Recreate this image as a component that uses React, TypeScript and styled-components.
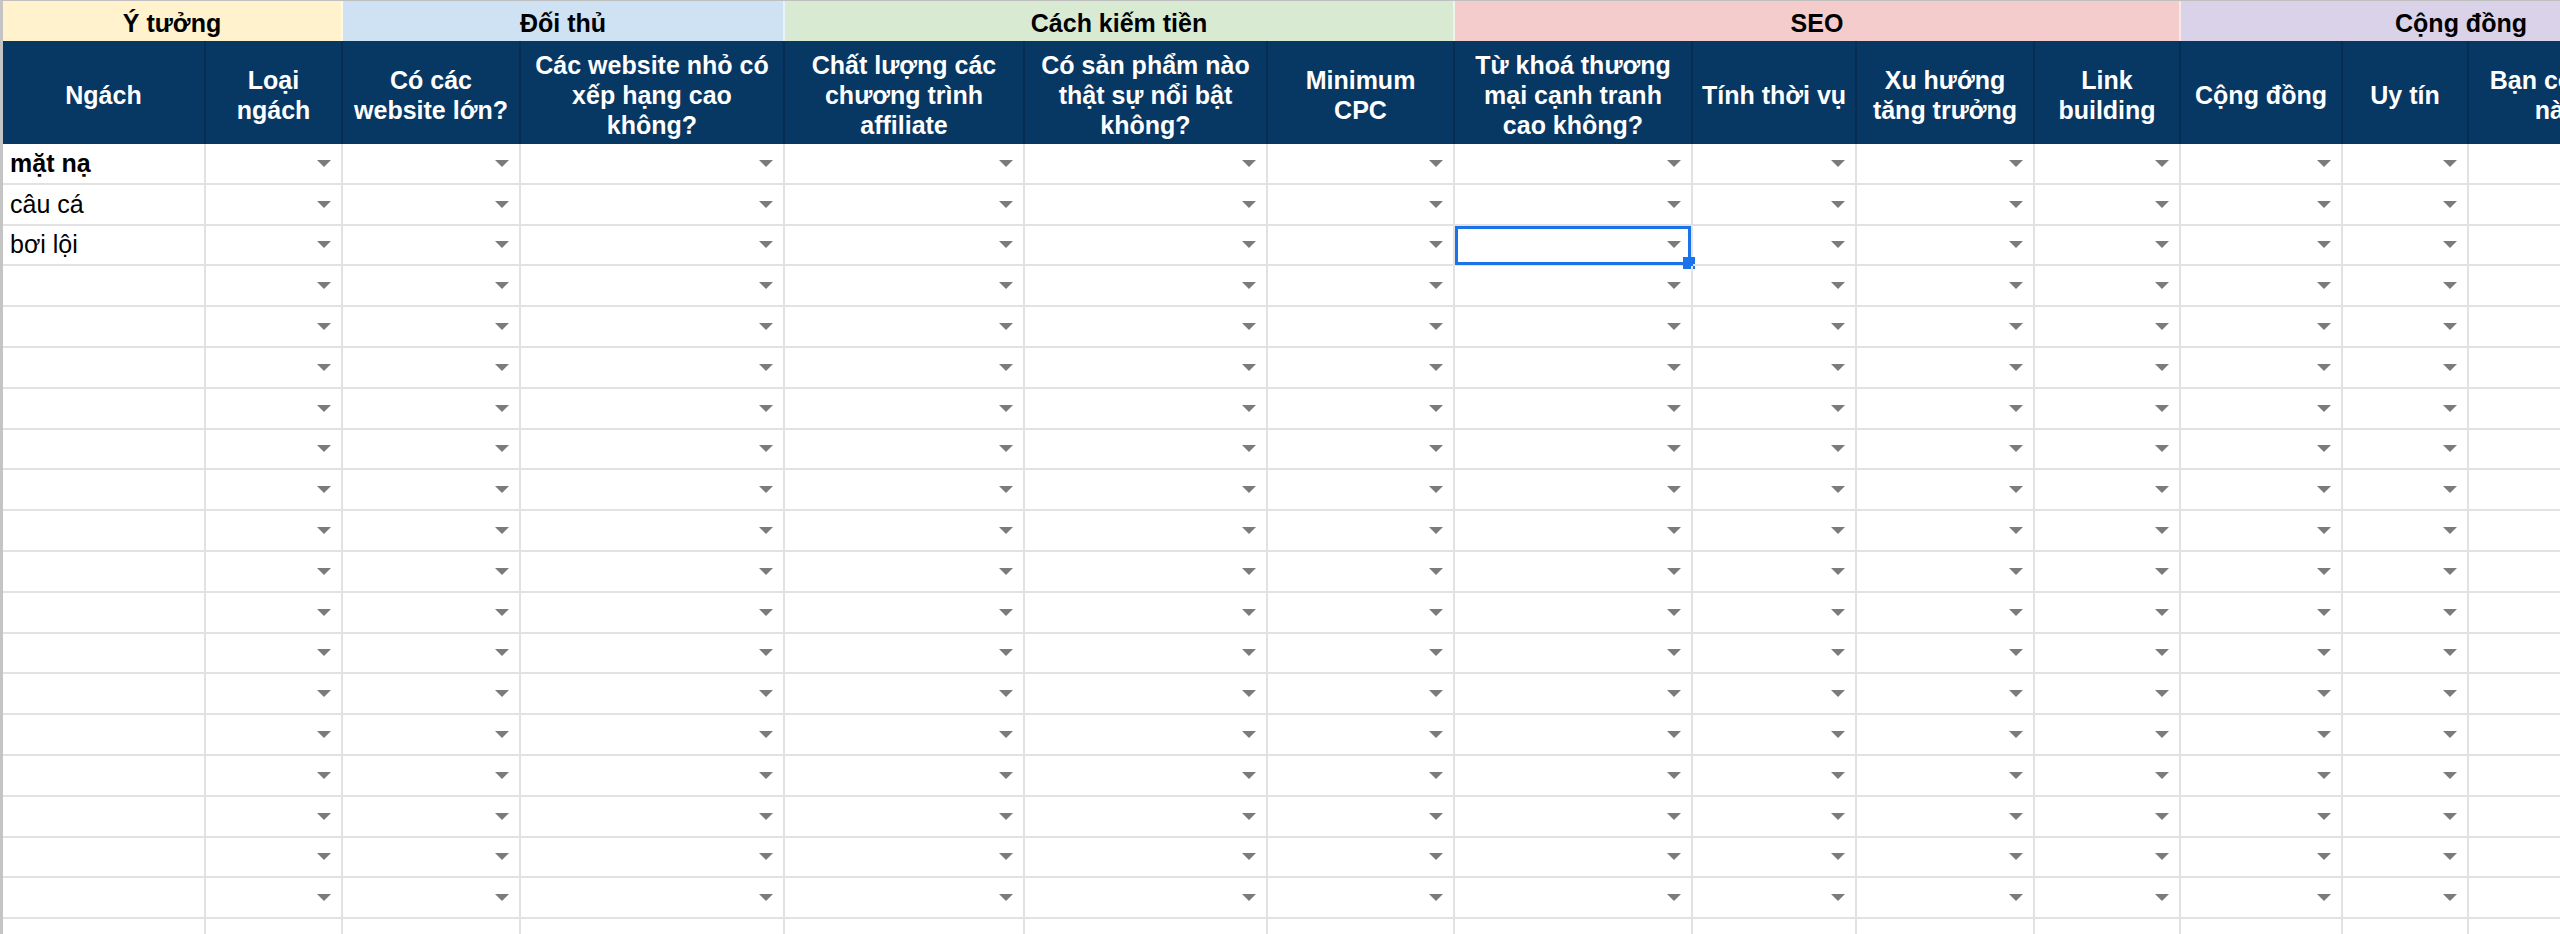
import React from 'react';
import styled, { createGlobalStyle } from 'styled-components';

const GlobalStyle = createGlobalStyle`
  html, body { margin: 0; padding: 0; background: #ffffff; overflow: hidden; }
  body { font-family: "Liberation Sans", Arial, "Noto Sans", sans-serif; }
  * { box-sizing: border-box; }
`;

const COLS = [203, 137, 178, 264, 240, 243, 187, 238, 164, 178, 146, 162, 126, 274];
const TEMPLATE = COLS.map((w) => `${w}px`).join(' ');

type Group = { label: string; span: number; color: string };

const GROUPS: Group[] = [
  { label: 'Ý tưởng', span: 2, color: '#fff2cc' },
  { label: 'Đối thủ', span: 2, color: '#cfe2f3' },
  { label: 'Cách kiếm tiền', span: 3, color: '#d9ead3' },
  { label: 'SEO', span: 4, color: '#f4cccc' },
  { label: 'Cộng đồng', span: 3, color: '#d9d2e9' },
];

const HEADERS: string[][] = [
  ['Ngách'],
  ['Loại', 'ngách'],
  ['Có các', 'website lớn?'],
  ['Các website nhỏ có', 'xếp hạng cao', 'không?'],
  ['Chất lượng các', 'chương trình', 'affiliate'],
  ['Có sản phẩm nào', 'thật sự nổi bật', 'không?'],
  ['Minimum', 'CPC'],
  ['Từ khoá thương', 'mại cạnh tranh', 'cao không?'],
  ['Tính thời vụ'],
  ['Xu hướng', 'tăng trưởng'],
  ['Link', 'building'],
  ['Cộng đồng'],
  ['Uy tín'],
  ['Bạn có thích ngách', 'này không?'],
];

type Row = { name: string; bold?: boolean };
const ROWS: Row[] = [
  { name: 'mặt nạ', bold: true },
  { name: 'câu cá' },
  { name: 'bơi lội' },
  ...Array.from({ length: 17 }, () => ({ name: '' })),
];

const SELECTED = { row: 2, col: 7 };

const Sheet = styled.div`
  display: flex;
  flex-direction: column;
  width: 2560px;
  height: 934px;
  overflow: hidden;
  border-top: 1px solid #bfbfbf;
  border-left: 3px solid #c4c4c4;
  background: #ffffff;
`;

const GridRow = styled.div`
  display: grid;
  grid-template-columns: ${TEMPLATE};
  width: max-content;
  flex: none;
`;

const GroupRow = styled(GridRow)`
  height: 40px;
`;

const GroupCell = styled.div<{ $span: number; $bg: string }>`
  grid-column: span ${(p) => p.$span};
  background: ${(p) => p.$bg};
  border-right: 2px solid rgba(255, 255, 255, 0.55);
  display: flex;
  align-items: center;
  justify-content: center;
  padding-top: 4px;
  font-size: 25px;
  font-weight: 700;
  color: #000000;
  white-space: nowrap;
`;

const HeaderRow = styled(GridRow)`
  height: 103px;
  background: #073763;
`;

const HeaderCell = styled.div`
  display: flex;
  flex-direction: column;
  align-items: center;
  justify-content: center;
  padding-top: 4px;
  border-right: 2px solid rgba(0, 0, 0, 0.16);
  color: #ffffff;
  font-size: 25px;
  font-weight: 700;
  line-height: 30px;
  text-align: center;
  white-space: nowrap;
  overflow: visible;
`;

const DataRow = styled(GridRow)`
  height: 40.8px;
`;

const DataCell = styled.div<{ $bold?: boolean }>`
  position: relative;
  display: flex;
  align-items: center;
  padding: 0 10px 0 7px;
  border-right: 2px solid #e2e2e2;
  border-bottom: 2px solid #e2e2e2;
  font-size: 25px;
  font-weight: ${(p) => (p.$bold ? 700 : 400)};
  color: #000000;
  white-space: nowrap;
`;

const Arrow = styled.span`
  margin-left: auto;
  width: 0;
  height: 0;
  border-left: 7px solid transparent;
  border-right: 7px solid transparent;
  border-top: 7px solid #7b7b7b;
`;

const Selection = styled.div`
  position: absolute;
  top: 0;
  left: 0;
  right: 0;
  bottom: -1px;
  border: 3px solid #1a73e8;
  pointer-events: none;
`;

const Handle = styled.div`
  position: absolute;
  right: -7px;
  bottom: -7px;
  width: 12px;
  height: 12px;
  background: #1a73e8;
`;

export default function App() {
  return (
    <>
      <GlobalStyle />
      <Sheet>
        <GroupRow>
          {GROUPS.map((g) => (
            <GroupCell key={g.label} $span={g.span} $bg={g.color}>
              {g.label}
            </GroupCell>
          ))}
        </GroupRow>
        <HeaderRow>
          {HEADERS.map((lines, i) => (
            <HeaderCell key={i}>
              {lines.map((l, j) => (
                <span key={j}>{l}</span>
              ))}
            </HeaderCell>
          ))}
        </HeaderRow>
        {ROWS.map((row, r) => (
          <DataRow key={r}>
            {COLS.map((_, c) => (
              <DataCell key={c} $bold={c === 0 && row.bold}>
                {c === 0 ? row.name : null}
                {c > 0 && c < 13 ? <Arrow /> : null}
                {r === SELECTED.row && c === SELECTED.col ? (
                  <Selection>
                    <Handle />
                  </Selection>
                ) : null}
              </DataCell>
            ))}
          </DataRow>
        ))}
      </Sheet>
    </>
  );
}
